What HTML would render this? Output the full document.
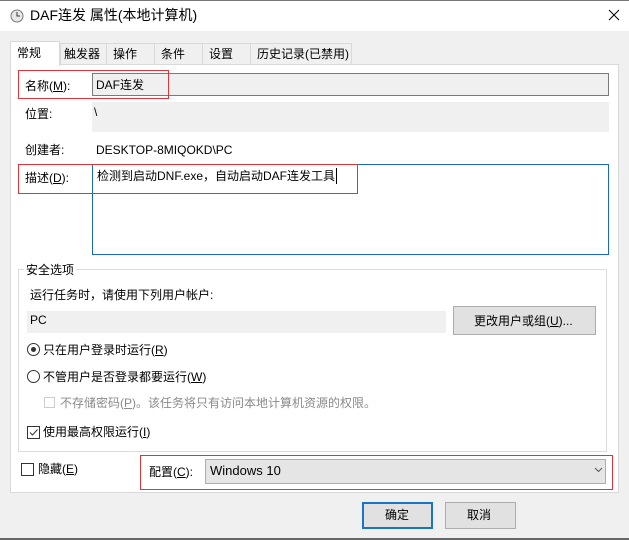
<!DOCTYPE html><html><head><meta charset="utf-8"><style>
*{box-sizing:border-box;margin:0;padding:0}
body{width:629px;height:540px;background:#f0f0f0;font-family:"Liberation Sans","Noto Sans CJK SC",sans-serif;font-size:12px;color:#000;position:relative;overflow:hidden}
.a{position:absolute}
.t{position:absolute;white-space:nowrap;line-height:16px}
u{text-decoration:underline}
.red{position:absolute;border:1px solid #e0333a}
</style></head><body>
<div class="a" style="left:0;top:0;width:629px;height:31px;background:#fff;border-top:1px solid #777"></div>
<svg class="a" style="left:10px;top:9px" width="14" height="14"><circle cx="7" cy="7" r="6" fill="#e8e8e8" stroke="#777"/><path d="M7 3v4h3" stroke="#333" fill="none"/></svg>
<div class="t" style="left:30px;top:7px;font-size:14px">DAF连发 属性(本地计算机)</div>
<svg class="a" style="left:608px;top:9px" width="12" height="12"><path d="M1 1L11 11M11 1L1 11" stroke="#000"/></svg>
<div class="a" style="left:10px;top:64px;width:609px;height:429px;background:#fff;border:1px solid #d9d9d9"></div>
<div class="a" style="left:10px;top:41px;width:50px;height:25px;background:#fff;border:1px solid #d9d9d9;border-bottom:none"></div>
<div class="t" style="left:17px;top:45px">常规</div>
<div class="a" style="left:60px;top:43px;width:292px;height:21px;border:1px solid #d9d9d9;border-bottom:none;background:#f0f0f0"></div>
<div class="a" style="left:106px;top:43px;width:1px;height:21px;background:#d9d9d9"></div>
<div class="a" style="left:154px;top:43px;width:1px;height:21px;background:#d9d9d9"></div>
<div class="a" style="left:202px;top:43px;width:1px;height:21px;background:#d9d9d9"></div>
<div class="a" style="left:250px;top:43px;width:1px;height:21px;background:#d9d9d9"></div>
<div class="t" style="left:64px;top:46px">触发器</div>
<div class="t" style="left:113px;top:46px">操作</div>
<div class="t" style="left:161px;top:46px">条件</div>
<div class="t" style="left:209px;top:46px">设置</div>
<div class="t" style="left:257px;top:46px">历史记录(已禁用)</div>
<div class="t" style="left:25px;top:78px">名称(<u>M</u>):</div>
<div class="a" style="left:92px;top:73px;width:517px;height:23px;background:#f0f0f0;border:1px solid #7a7a7a"></div>
<div class="t" style="left:96px;top:77px">DAF连发</div>
<div class="red" style="left:18px;top:70px;width:151px;height:29px"></div>
<div class="t" style="left:25px;top:106px">位置:</div>
<div class="a" style="left:92px;top:102px;width:517px;height:30px;background:#f0f0f0"></div>
<div class="t" style="left:94px;top:104px">\</div>
<div class="t" style="left:25px;top:142px">创建者:</div>
<div class="t" style="left:96px;top:142px">DESKTOP-8MIQOKD\PC</div>
<div class="a" style="left:92px;top:164px;width:517px;height:91px;background:#fff;border:1px solid #1a6ab5"></div>
<div class="t" style="left:25px;top:170px">描述(<u>D</u>):</div>
<div class="t" style="left:97px;top:168px">检测到启动DNF.exe，自动启动DAF连发工具</div>
<div class="a" style="left:336px;top:168px;width:1px;height:16px;background:#000"></div>
<div class="red" style="left:18px;top:164px;width:340px;height:30px"></div>
<div class="a" style="left:18px;top:269px;width:589px;height:183px;border:1px solid #dcdcdc"></div>
<div class="t" style="left:24px;top:262px;background:#fff;padding:0 2px">安全选项</div>
<div class="t" style="left:30px;top:287px">运行任务时，请使用下列用户帐户:</div>
<div class="a" style="left:27px;top:311px;width:419px;height:22px;background:#f0f0f0"></div>
<div class="t" style="left:30px;top:312px">PC</div>
<div class="a" style="left:453px;top:306px;width:143px;height:29px;background:#e1e1e1;border:1px solid #adadad"></div>
<div class="t" style="left:474px;top:313px">更改用户或组(<u>U</u>)...</div>
<div class="a" style="left:27px;top:343px;width:13px;height:13px;border:1px solid #333;border-radius:50%"></div>
<div class="a" style="left:31px;top:347px;width:5px;height:5px;background:#333;border-radius:50%"></div>
<div class="t" style="left:43px;top:342px">只在用户登录时运行(<u>R</u>)</div>
<div class="a" style="left:27px;top:370px;width:13px;height:13px;border:1px solid #333;border-radius:50%"></div>
<div class="t" style="left:43px;top:369px">不管用户是否登录都要运行(<u>W</u>)</div>
<div class="a" style="left:44px;top:397px;width:11px;height:11px;border:1px solid #ccc"></div>
<div class="t" style="left:60px;top:395px;color:#8a8a8a">不存储密码(<u>P</u>)。该任务将只有访问本地计算机资源的权限。</div>
<div class="a" style="left:27px;top:426px;width:13px;height:13px;border:1px solid #333"></div>
<svg class="a" style="left:28px;top:427px" width="11" height="11"><path d="M2 5.5L4.5 8L9.5 2.5" stroke="#333" fill="none"/></svg>
<div class="t" style="left:43px;top:424px">使用最高权限运行(<u>I</u>)</div>
<div class="a" style="left:21px;top:463px;width:13px;height:13px;border:1px solid #333"></div>
<div class="t" style="left:38px;top:461px">隐藏(<u>E</u>)</div>
<div class="red" style="left:140px;top:455px;width:473px;height:35px"></div>
<div class="t" style="left:149px;top:464px">配置(<u>C</u>):</div>
<div class="a" style="left:205px;top:459px;width:401px;height:25px;background:#e5e5e5;border:1px solid #adadad"></div>
<div class="t" style="left:210px;top:463px;font-size:13px">Windows 10</div>
<svg class="a" style="left:594px;top:467px" width="9" height="6"><path d="M1 1L4.5 4.5L8 1" stroke="#555" fill="none"/></svg>
<div class="a" style="left:362px;top:502px;width:71px;height:27px;background:#e1e1e1;border:2px solid #1a73c6"></div>
<div class="t" style="left:385px;top:507px">确定</div>
<div class="a" style="left:445px;top:502px;width:71px;height:27px;background:#e1e1e1;border:1px solid #adadad"></div>
<div class="t" style="left:467px;top:507px">取消</div>
<div class="a" style="left:0;top:538px;width:629px;height:2px;background:#666"></div>
</body></html>
